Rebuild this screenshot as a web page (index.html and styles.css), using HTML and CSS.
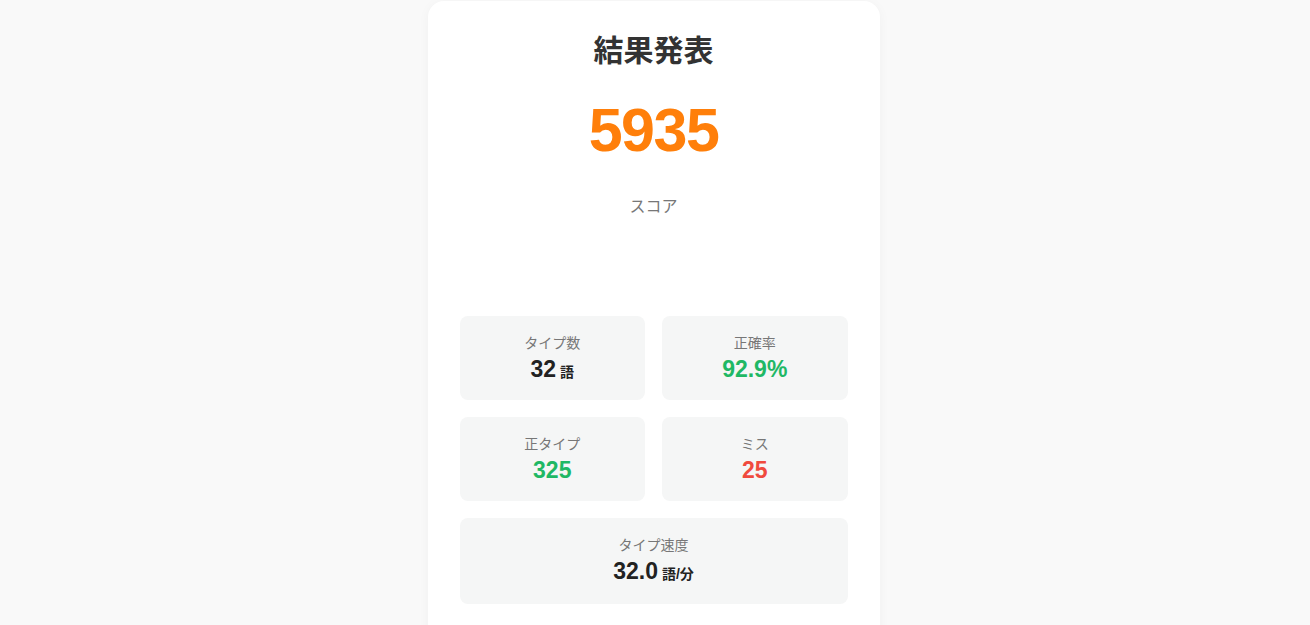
FILE: index.html
```html
<!doctype html>
<html lang="ja">
<head>
<meta charset="utf-8">
<title>結果発表</title>
<link rel="stylesheet" href="styles.css">
</head>
<body>
	<div class="result">
		<h1 class="result-title">結果発表</h1>
		<div class="score">5935</div>
		<div class="score-label">スコア</div>

		<div class="stats">
			<div class="stat">
				<div class="stat-label">タイプ数</div>
				<div class="stat-value">32<span class="unit">語</span></div>
			</div>
			<div class="stat">
				<div class="stat-label">正確率</div>
				<div class="stat-value good">92.9%</div>
			</div>
			<div class="stat">
				<div class="stat-label">正タイプ</div>
				<div class="stat-value good">325</div>
			</div>
			<div class="stat">
				<div class="stat-label">ミス</div>
				<div class="stat-value bad">25</div>
			</div>
			<div class="stat wide">
				<div class="stat-label">タイプ速度</div>
				<div class="stat-value">32.0<span class="unit">語/分</span></div>
			</div>
		</div>
	</div>
</body>
</html>
```

FILE: styles.css
```css
*{
	padding: 0;
	margin: 0;
	box-sizing: border-box;
}
html, body{
	height: 100%;
	overflow: hidden;
}
body{
	padding-right: 3px;
	background-color: #f9f9f9;
	font-family: "Liberation Sans", "Noto Sans CJK JP", sans-serif;
	color: #333;
}
.result{
	width: 452px;
	margin: 1px auto 0;
	padding: 30px 32px 40px;
	background-color: #fff;
	border-radius: 16px;
	box-shadow: 0 2px 12px rgba(0,0,0,0.04);
	text-align: center;
	min-height: 700px;
}
.result-title{
	font-size: 30px;
	font-weight: bold;
	line-height: 40px;
	color: #333;
}
.score{
	margin-top: 19px;
	font-size: 61px;
	font-weight: bold;
	line-height: 80px;
	color: #ff7f0a;
	letter-spacing: -1.5px;
}
.score-label{
	margin-top: 27px;
	font-size: 16px;
	line-height: 20px;
	color: #777;
}
.stats{
	display: grid;
	grid-template-columns: 1fr 1fr;
	gap: 17px;
	margin-top: 99px;
}
.stat{
	height: 84px;
	padding-top: 17px;
	background-color: #f5f6f6;
	border-radius: 8px;
}
.stat.wide{
	grid-column: 1 / 3;
	height: 86px;
}
.stat-label{
	font-size: 14px;
	line-height: 20px;
	color: #777;
}
.stat-value{
	margin-top: 1px;
	font-size: 23px;
	font-weight: bold;
	line-height: 30px;
	color: #222;
}
.stat-value .unit{
	margin-left: 4px;
	font-size: 14px;
}
.good{
	color: #1fb865;
}
.bad{
	color: #f04a3e;
}
```
